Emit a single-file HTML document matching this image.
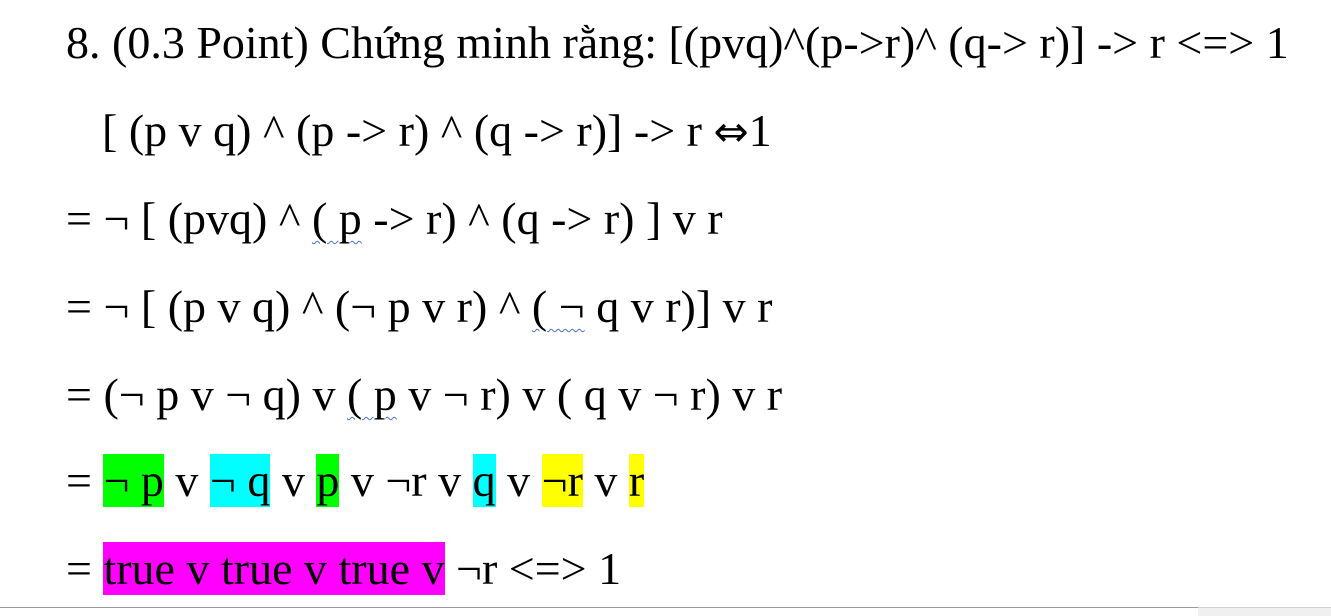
<!DOCTYPE html>
<html><head><meta charset="utf-8"><style>
body{margin:0;width:1331px;height:615px;background:#fff;overflow:hidden;position:relative;font-family:"Liberation Serif","Noto Serif CJK SC",serif;font-size:46px;color:#000}
.l{position:absolute;left:66px;height:53px;line-height:53px;white-space:pre}
.h{display:inline-block;height:53px}
.g{background:#00ff00}.c{background:#00ffff}.y{background:#ffff00}.m{background:#ff00ff}
.w{text-decoration:underline wavy #4a6fd0;text-decoration-thickness:1px;text-underline-offset:6px}
.ar{font-family:"DejaVu Sans",sans-serif;font-size:42px}
#bar{position:absolute;left:0;top:607px;width:1198px;height:1px;background:#9a9a9a}
#br{position:absolute;left:1198px;top:607px;width:133px;height:8px;background:#f0f0f0;border-top:1px solid #d0d0d0}
</style></head><body>
<div class="l" style="top:16px">8. (0.3 Point) Chứng minh rằng: [(pvq)^(p-&gt;r)^ (q-&gt; r)] -&gt; r &lt;=&gt; 1</div>
<div class="l" style="top:104px;left:102px">[ (p v q) ^ (p -&gt; r) ^ (q -&gt; r)] -&gt; r <span class="ar">⇔</span>1</div>
<div class="l" style="top:192px">= ¬ [ (pvq) ^ <span class="w">( p</span> -&gt; r) ^ (q -&gt; r) ] v r</div>
<div class="l" style="top:280px">= ¬ [ (p v q) ^ (¬ p v r) ^ <span class="w">( ¬</span> q v r)] v r</div>
<div class="l" style="top:368px">= (¬ p v ¬ q) v <span class="w">( p</span> v ¬ r) v ( q v ¬ r) v r</div>
<div class="l" style="top:454px">= <span class="h g">¬ p</span> v <span class="h c">¬ q</span> v <span class="h g">p</span> v ¬r v <span class="h c">q</span> v <span class="h y">¬r</span> v <span class="h y">r</span></div>
<div class="l" style="top:542px">= <span class="h m">true v true v true v</span> ¬r &lt;=&gt; 1</div>
<div id="bar"></div><div id="br"></div>
</body></html>
